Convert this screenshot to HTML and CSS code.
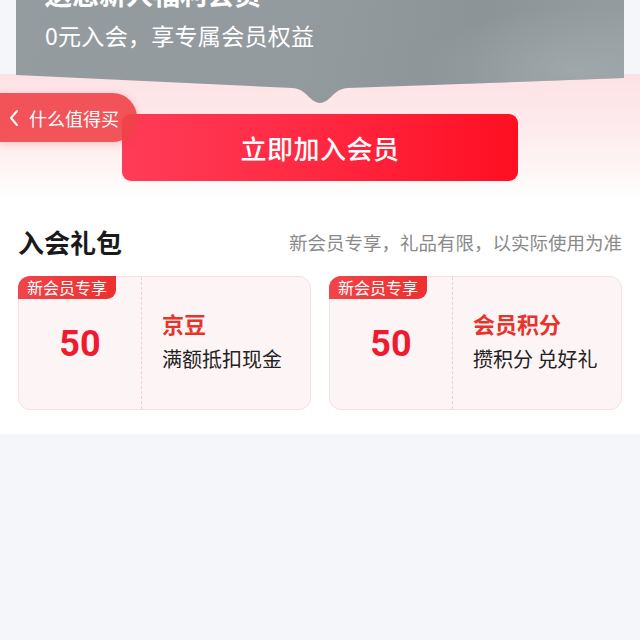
FILE: index.html
```html
<!DOCTYPE html>
<html lang="zh">
<head>
<meta charset="utf-8">
<title>入会礼包</title>
<link rel="stylesheet" href="styles.css">
</head>
<body>
<div class="page">
  <div class="hero">
    <div class="hero-card">
      <div class="hero-title">送您新人福利会员</div>
      <div class="hero-sub">0元入会，享专属会员权益</div>
    </div>
  </div>
  <div class="promo">
    <button class="join-btn">立即加入会员</button>
  </div>
  <a class="back-pill">
    <svg class="chev" width="12" height="18" viewBox="0 0 12 18"><path d="M9 2 L3 9 L9 16" fill="none" stroke="#fff" stroke-width="2" stroke-linecap="round" stroke-linejoin="round"/></svg>
    <span>什么值得买</span>
  </a>
  <section class="gift">
    <div class="gift-head">
      <h2 class="gift-title">入会礼包</h2>
      <span class="gift-note">新会员专享，礼品有限，以实际使用为准</span>
    </div>
    <div class="gift-grid">
      <div class="coupon">
        <span class="badge">新会员专享</span>
        <div class="coupon-left"><span class="amount">50</span></div>
        <div class="coupon-right">
          <div class="c-title">京豆</div>
          <div class="c-desc">满额抵扣现金</div>
        </div>
      </div>
      <div class="coupon">
        <span class="badge">新会员专享</span>
        <div class="coupon-left"><span class="amount">50</span></div>
        <div class="coupon-right">
          <div class="c-title">会员积分</div>
          <div class="c-desc">攒积分 兑好礼</div>
        </div>
      </div>
    </div>
  </section>
</div>
</body>
</html>
```
FILE: styles.css
```css
* { box-sizing: border-box; }
html, body { margin: 0; padding: 0; }
body {
  background: #f5f6fa;
  font-family: "Noto Sans CJK SC", "Noto Sans", sans-serif;
  width: 640px;
  height: 640px;
  overflow: hidden;
}
.page { position: relative; }
.hero {
  padding: 0 16px;
  position: relative;
  z-index: 2;
}
.hero-card {
  height: 104px;
  background:
    radial-gradient(ellipse 220px 90px at 560px 70px, rgba(170,178,182,0.55), rgba(170,178,182,0) 70%),
    linear-gradient(100deg, #959ca0 0%, #939a9e 50%, #8d9498 75%, #969da1 100%);
  clip-path: path("M0,0 H608 V78 L332,88 C318,88 314,103 304,103 C294,103 290,88 276,88 L0,75 Z");
  padding-left: 29px;
  overflow: hidden;
}
.hero-title {
  color: #fff;
  font-size: 27px;
  font-weight: 700;
  line-height: 32px;
  margin-top: -22px;
}
.hero-sub {
  color: #fff;
  font-size: 23px;
  line-height: 32px;
  margin-top: 9px;
  letter-spacing: 0.3px;
}
.promo {
  margin-top: -30px;
  padding: 40px 0 19px;
  background: linear-gradient(180deg, #fde2e5 0px, #fdeaec 50px, #fef5f5 95px, #ffffff 126px);
  display: flex;
  justify-content: center;
}
.join-btn {
  width: 396px;
  height: 67px;
  border: none;
  border-radius: 9px;
  background: linear-gradient(90deg, #ff3c57 0%, #ff2a44 45%, #ff0f22 100%);
  color: #fff;
  font-family: "Noto Sans CJK SC", sans-serif;
  font-size: 26px;
  font-weight: 500;
  letter-spacing: 0.5px;
  padding: 0;
}
.back-pill {
  position: absolute;
  left: 0;
  top: 93px;
  width: 137px;
  height: 49px;
  border-radius: 0 25px 25px 0;
  background: rgba(240, 66, 72, 0.9);
  box-shadow: 0 2px 8px rgba(220, 60, 70, 0.25);
  z-index: 3;
  display: flex;
  align-items: center;
  padding-left: 8px;
  gap: 9px;
  color: #fff;
  font-size: 18px;
}
.chev { flex: none; }
.gift {
  background: #fff;
  padding: 26px 18px 24px;
}
.gift-head {
  display: flex;
  justify-content: space-between;
  align-items: center;
  height: 32px;
  margin-bottom: 18px;
}
.gift-title {
  margin: 0;
  font-size: 26px;
  font-weight: 700;
  color: #1a1a1a;
  line-height: 32px;
}
.gift-note {
  font-size: 18.5px;
  color: #8a8a8a;
}
.gift-grid {
  display: grid;
  grid-template-columns: 293px 293px;
  column-gap: 18px;
}
.coupon {
  position: relative;
  height: 134px;
  border: 1px solid #f6dfe2;
  border-radius: 12px;
  background: #fdf4f5;
  display: flex;
}
.badge {
  position: absolute;
  left: -1px;
  top: -1px;
  height: 23px;
  padding: 0 9px;
  background: linear-gradient(90deg, #f0454a, #ee2f2f);
  color: #fff;
  font-size: 16px;
  line-height: 23px;
  border-radius: 12px 0 9px 0;
}
.coupon-left {
  width: 123px;
  border-right: 1px dashed #f2cdd2;
  display: flex;
  align-items: center;
  justify-content: center;
}
.amount {
  font-family: "Roboto", "Noto Sans", sans-serif;
  font-weight: 700;
  font-size: 36px;
  color: #f01a30;
  margin-top: 2px;
}
.coupon-right {
  padding-left: 20px;
  display: flex;
  flex-direction: column;
  justify-content: center;
}
.c-title {
  font-size: 22px;
  font-weight: 700;
  color: #e8332a;
  line-height: 32px;
  margin-top: -6px;
}
.c-desc {
  font-size: 20px;
  color: #222;
  line-height: 30px;
  margin-top: 5px;
}
```
